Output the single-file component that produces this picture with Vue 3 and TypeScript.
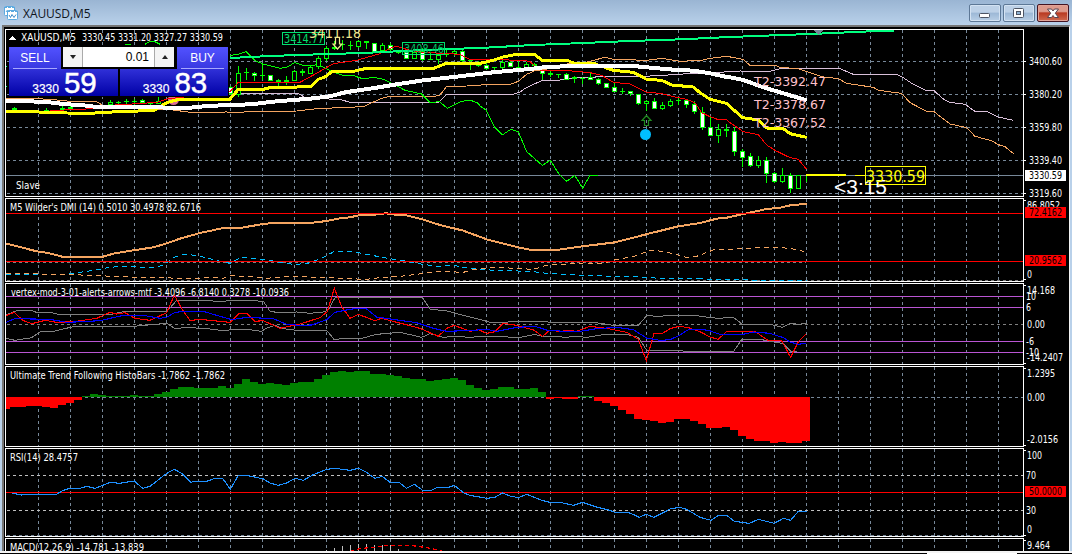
<script setup lang="ts">
type Run = [number, number, string]
interface Trace { color: string; width: number; dash?: string; runs: Run[] }
interface Label { t: string; x: number; y: number; w: number; c?: string; s?: number; f?: string }

// Each run holds an origin followed by x,y pairs in thirds of a pixel.
const points = (runs: Run[]): string =>
  runs.map(([ox, oy, list]) =>
    list.trim().split(/\s+/).map((p) => {
      const [x, y] = p.split(',').map(Number)
      return (ox + x / 3).toFixed(2) + ',' + (oy + y / 3).toFixed(2)
    }).join(' ')
  ).join(' ')

const SANDY = '#f4a460'
const GREY = '#808080'
const GRID = '#778899'
const LIME = '#00ff00'

const gridX = Array.from({ length: 31 }, (_, i) => 38 + i * 32)
const panels = [
  { top: 29, bottom: 196 }, { top: 198, bottom: 281 }, { top: 283, bottom: 364 },
  { top: 366, bottom: 446 }, { top: 448, bottom: 536 }, { top: 538, bottom: 560 },
]
const gridY = [61, 94, 127, 160, 193]

const underTraces: Trace[] = [
  { color: '#d8bfd8', width: 1, runs: [
    [0, 0, '690,281'],
    [230, 20, '0,221 205,221 230,235 330,238 360,247 625,247 650,223 780,223'],
    [480, 20, '100,223 120,216 135,205 187,181 235,181 265,175 340,172 360,169 500,169 530,166 600,164 620,160 700,158 780,153'],
    [730, 20, '120,154 150,146 330,146 370,163 500,163 520,173 545,190 590,212 612,212 640,237 660,247 705,253 735,274 770,274 805,291 850,301'],
  ] },
  { color: SANDY, width: 1, runs: [
    [0, 0, '18,296 60,294 150,298 200,303 290,305 310,317 400,322 520,330 570,337 680,336 700,337'],
    [230, 20, '25,278 50,275 200,273 260,266 400,260 455,235 480,229 610,230 630,225 650,199 710,198 780,193'],
    [480, 20, '90,193 115,184 140,163 165,152 200,147 270,130 320,126 340,121 375,112 400,118 500,121 545,115 600,124 665,121 690,115 740,109 780,116'],
    [730, 20, '40,119 60,136 135,136 150,142 205,146 275,170 325,176 350,190 430,202 445,211 515,220 540,248 590,274 612,275 660,312 710,323 735,349 785,362 805,374 825,380 852,402'],
  ] },
  { color: LIME, width: 1, runs: [
    [230, 20, '0,106 25,103 48,95 75,122 100,132 150,145 175,140 194,127 220,137 245,138 262,133 300,152 335,165 365,165 400,177 430,172 460,178 500,197 525,211 575,222 600,248 628,245 652,265 695,244 720,240 745,250'],
    [480, 20, '0,258 18,270 43,320 67,345 92,328 115,335 140,395 187,436 211,421 236,461 260,484 284,466 308,504 330,466 353,466'],
  ] },
  { color: LIME, width: 1, runs: [[0, 0, '375,133 393,133']] },
  { color: LIME, width: 1, runs: [[0, 0, '435,133 450,124 463,124 480,133']] },
]

const overTraces: Trace[] = [
  { color: '#ff0000', width: 1, runs: [
    [0, 0, '150,332 280,326 330,316 380,313 470,307 500,297 690,275 715,247'],
    [230, 20, '25,187 210,187 245,168 310,131 380,121 450,101 480,85 500,79 540,91 580,97 690,103 720,118'],
    [480, 20, '0,118 130,121 150,125 180,150 265,152 330,158 365,166 400,187 450,192 500,217 540,220 580,230 620,238 645,248 665,278 690,290 715,299 740,300'],
    [730, 20, '0,308 40,335 85,344 110,375 135,391 180,413 205,418 230,448'],
  ] },
  { color: '#00ff7f', width: 2, runs: [
    [0, 0, '690,174'],
    [230, 20, '60,111 120,108 265,103 400,99 560,91 740,84'],
    [480, 20, '0,84 160,75 310,69 450,63 600,58 750,51'],
    [730, 20, '0,51 130,46 265,41 420,34 492,32'],
  ] },
  { color: '#ffff00', width: 3, runs: [
    [0, 0, '18,334 90,335 200,339 270,340 370,334 460,332 500,308 540,297 690,297 715,268 790,268'],
    [230, 20, '100,208 120,203 243,200 265,178 285,171 305,155 370,154 405,146 612,145 648,130 750,130'],
    [480, 20, '0,130 40,121 65,112 110,103 163,103 187,121 262,121 280,129 340,130 400,151 460,157 500,178 545,181 575,195 640,201 660,218 690,238 740,250'],
    [730, 20, '0,260 38,293 85,300 110,324 160,326 180,341 230,352'],
  ] },
  { color: '#ffffff', width: 4, runs: [
    [0, 0, '18,303 75,303 160,308 190,312 250,316 290,321 400,322 570,323 620,318 690,315'],
    [230, 20, '20,255 70,252 140,244 240,236 300,229 345,217 440,203 500,193 580,181 680,170 780,158'],
    [480, 20, '60,155 150,147 190,142 270,138 450,137 500,142 580,149 640,152 690,160 740,171'],
    [730, 20, '0,172 40,180 100,202 180,226 230,241'],
  ] },
]

// x, high, low, body top, body bottom, kind (1 filled, 0 hollow), in thirds of a pixel from the origin
type Candle = [number, number, number, number, number, number]
const candleSets: { ox: number; oy: number; list: Candle[] }[] = [
  { ox: 0, oy: 0, list: [
    [43, 321, 333, 324, 330, 1], [139, 323, 333, 329, 332, 1], [187, 319, 332, 324, 330, 0], [211, 319, 330, 321, 327, 0],
    [331, 300, 315, 306, 315, 0], [355, 302, 315, 306, 309, 1], [379, 297, 315, 303, 306, 1], [403, 297, 320, 303, 306, 1],
    [427, 298, 312, 300, 309, 1], [451, 305, 320, 309, 312, 1], [475, 292, 312, 303, 312, 0], [691, 258, 284, 261, 282, 1],
  ] },
  { ox: 230, oy: 20, list: [
    [25, 139, 231, 159, 225, 0], [49, 145, 181, 156, 160, 1], [73, 156, 183, 159, 168, 1], [97, 131, 180, 165, 168, 1],
    [121, 165, 183, 165, 183, 1], [145, 177, 199, 180, 186, 1], [169, 168, 196, 181, 185, 1], [193, 150, 184, 153, 183, 0],
    [217, 147, 168, 153, 159, 1], [241, 135, 162, 141, 162, 0], [265, 107, 147, 114, 141, 0], [289, 79, 123, 84, 117, 0],
    [313, 63, 90, 81, 87, 1], [337, 60, 90, 73, 76, 1], [361, 63, 90, 75, 79, 1], [385, 60, 84, 63, 81, 0],
    [409, 63, 88, 63, 70, 1], [433, 69, 96, 69, 96, 1], [457, 69, 94, 75, 93, 0], [481, 69, 99, 75, 90, 1],
    [505, 92, 102, 96, 99, 1], [529, 91, 118, 91, 118, 1], [553, 90, 117, 96, 117, 0], [577, 84, 123, 93, 120, 1],
    [601, 96, 120, 117, 120, 1], [625, 102, 132, 105, 120, 0], [649, 87, 112, 102, 105, 1], [673, 84, 108, 94, 103, 0],
    [697, 90, 126, 93, 123, 1], [721, 118, 150, 120, 124, 1], [745, 124, 142, 133, 137, 1], [769, 129, 150, 135, 147, 1],
  ] },
  { ox: 480, oy: 20, list: [
    [19, 132, 150, 135, 147, 1], [43, 141, 151, 141, 145, 1], [67, 120, 147, 127, 143, 0], [91, 124, 142, 126, 141, 1],
    [115, 122, 146, 140, 144, 1], [139, 127, 146, 132, 143, 0], [163, 130, 142, 132, 137, 1], [187, 150, 181, 151, 162, 1],
    [211, 154, 172, 159, 166, 1], [235, 162, 174, 162, 166, 1], [259, 159, 181, 162, 180, 1], [283, 168, 189, 172, 176, 1],
    [307, 171, 192, 174, 178, 1], [331, 160, 181, 171, 180, 1], [355, 175, 195, 177, 192, 1], [379, 189, 204, 189, 204, 1],
    [403, 189, 216, 201, 216, 1], [427, 204, 222, 213, 217, 1], [451, 212, 228, 214, 223, 1], [475, 222, 255, 222, 252, 1],
    [499, 240, 273, 243, 252, 0], [523, 234, 267, 243, 267, 1], [547, 246, 271, 255, 267, 0], [571, 237, 261, 243, 258, 0],
    [595, 234, 256, 240, 244, 1], [619, 237, 264, 240, 255, 1], [643, 243, 282, 252, 276, 1], [667, 261, 330, 276, 324, 1],
    [691, 290, 348, 321, 348, 1], [715, 312, 370, 327, 348, 0], [739, 312, 351, 327, 334, 1], [763, 321, 408, 333, 396, 1],
  ] },
  { ox: 730, oy: 20, list: [
    [37, 387, 441, 393, 414, 1], [61, 399, 441, 408, 438, 1], [85, 408, 444, 420, 438, 0], [109, 411, 489, 420, 462, 1],
    [133, 456, 489, 459, 486, 1], [157, 444, 489, 465, 486, 0], [181, 459, 519, 465, 507, 1], [205, 465, 507, 465, 507, 0],
  ] },
]
const candles = candleSets.flatMap((set) => set.list.map(([x, hi, lo, top, bottom, filled]) => {
  const y = Math.round(set.oy + top / 3)
  return {
    x: Math.floor(set.ox + x / 3),
    hi: Math.round(set.oy + hi / 3),
    lo: Math.round(set.oy + lo / 3),
    y,
    h: Math.max(1, Math.round(set.oy + bottom / 3) - y),
    fill: filled ? '#ffffff' : '#000000',
  }
}))

const indicatorTraces: Trace[] = [
  { color: '#00bfff', width: 1, dash: '5 4', runs: [
    [0, 195, '18,238 100,240 200,238 240,232 310,222 325,217 380,214 460,219 490,210 520,188 550,178 590,181 640,194 690,205 725,186 760,191 790,193 850,204 880,208 920,206 960,192 1000,171 1050,168'],
    [350, 195, '0,168 60,180 120,191 160,197 200,205 260,214 310,211 350,219 430,226 540,229 600,236 700,241 800,244 870,246 930,250 1060,250'],
    [700, 195, '0,250 20,253 140,254 150,257 320,257'],
  ] },
  { color: SANDY, width: 1, dash: '5 4', runs: [
    [0, 195, '18,235 110,236 130,238 230,238 250,241 350,244 400,247 500,247 520,250 600,250 620,247 670,250 690,241 760,246 800,250 850,245 900,244 950,248 1050,250'],
    [350, 195, '40,254 90,248 160,243 230,234 270,229 340,232 370,224 440,217 550,223 590,211 700,204 760,205 800,193 850,185 900,166 940,169 1010,187 1040,184'],
    [700, 195, '0,180 45,163 90,165 110,161 190,158 240,157 300,165 318,173'],
  ] },
  { color: SANDY, width: 2, runs: [
    [0, 195, '18,146 40,151 110,169 145,174 190,186 305,186 340,176 400,166 460,157 500,145 540,131 600,114 670,99 725,98 790,87 820,84 930,84 980,78 1020,70'],
    [350, 195, '0,67 30,60 95,58 105,54 125,58 170,61 220,74 270,90 340,107 410,133 500,156 545,165 620,165 690,155 795,142 900,115 985,94'],
    [700, 195, '0,84 50,71 80,68 130,57 200,42 240,38 275,30 320,27'],
  ] },
  { color: GREY, width: 1, runs: [
    [0, 195, '18,360 50,347 95,347 115,354 150,351 170,357 340,357 370,350 500,350 530,316 620,316 650,319 740,316 790,319 810,349 830,352 890,351 930,355 970,351 985,345 1005,308'],
    [350, 195, '0,307 217,307 240,342 290,348 430,384 490,380 545,380 580,379 600,382 730,382 790,391 865,391 890,362 930,364 960,361 1040,361'],
    [700, 195, '0,364 55,370 100,367 127,388 210,388 248,397 270,385 295,388 320,385'],
  ] },
  { color: GREY, width: 1, runs: [
    [0, 195, '18,430 45,436 95,428 120,411 165,408 215,396 300,394 400,394 500,385 525,401 560,397 630,402 660,406 740,403 785,409 800,399 825,391 850,401 890,406 980,406 1002,433'],
    [350, 195, '0,430 35,430 80,418 150,412 215,427 240,416 280,427 310,424 360,427 400,424 510,427 555,418 580,425 620,424 645,427 680,424 710,427 760,419 830,418 865,427 890,466 1050,469'],
    [700, 195, '100,470 125,434 185,434 250,446 275,471 290,470'],
  ] },
  { color: '#ff0000', width: 1.1, runs: [
    [0, 195, '18,362 43,352 68,376 95,386 135,376 170,382 220,380 290,370 330,352 350,357 375,353 405,370 450,376 500,353 523,300 545,340 570,377 600,373 690,382 715,357 740,355 765,379 790,377 840,400 900,387 960,368 982,350 1003,280 1025,335 1050,370'],
    [350, 195, '25,358 75,377 95,370 210,400 265,424 290,400 313,391 360,409 385,404 410,415 435,410 460,385 500,391 550,405 578,424 600,405 630,410 650,406 680,409 720,394 770,400 830,412 865,433 889,497 912,415 938,415 960,401 988,394 1015,398'],
    [700, 195, '0,410 30,426 55,433 80,409 165,409 205,437 245,437 272,487 295,440 318,417'],
  ] },
  { color: '#0000ff', width: 1.1, runs: [
    [0, 195, '18,382 45,371 150,373 200,382 250,380 300,377 370,361 430,361 480,370 500,367 525,352 560,349 610,349 650,361 695,374 740,367 820,371 860,388 900,391 935,390 980,374 1005,352'],
    [350, 195, '0,343 30,339 50,342 80,366 150,376 200,383 250,400 290,409 370,406 410,403 440,409 500,397 555,394 590,405 640,409 690,409 740,401 800,397 850,404 890,429 935,437 965,432 990,420 1015,404'],
    [700, 195, '0,403 25,406 60,418 130,418 160,411 210,415 250,428 270,441 295,448 318,444'],
  ] },
  { color: '#1e90ff', width: 1.1, runs: [
    [0, 365, '35,384 65,390 100,388 150,388 165,390 190,376 210,370 240,370 260,364 285,370 330,352 360,355 375,352 403,348 428,370 450,364 500,325 523,313 545,325 572,352 585,349 620,349 645,340 668,340 691,373 715,331 740,331 790,342 810,354 835,361 860,354 885,340 910,346 940,329 980,313 1005,310'],
    [350, 365, '0,316 25,310 45,319 75,340 97,334 120,352 147,352 170,370 193,358 218,376 245,376 262,367 295,367 313,361 340,383 360,391 410,400 435,397 457,384 480,393 505,398 530,388 575,406 600,412 630,412 670,421 697,412 740,426 780,436 795,442 840,444 868,457 888,448 912,457 940,443 960,432 988,427 1010,433'],
    [700, 365, '0,457 33,466 55,451 80,451 103,469 148,475 175,463 223,475 250,460 272,466 295,439 320,439'],
  ] },
  { color: '#ff0000', width: 1.2, dash: '4 3', runs: [
    [350, 365, '0,559 30,551 110,542 180,541 230,548 275,557'],
  ] },
]

const levels = [
  { y: 213, c: '#ff0000' }, { y: 261, c: '#ff0000' }, { y: 296, c: '#ba55d3' }, { y: 307, c: '#ba55d3' },
  { y: 341, c: '#ba55d3' }, { y: 352, c: '#ba55d3' }, { y: 492, c: '#ff0000' },
]
const dashedLevels = [
  { y: 262, c: GREY, to: 806 }, { y: 280, c: GREY, to: 1023 }, { y: 324, c: GREY, to: 1023 }, { y: 397, c: GRID, to: 1023 },
  { y: 475, c: '#c0c0c0', to: 1023 }, { y: 510, c: '#c0c0c0', to: 1023 }, { y: 535, c: GRID, to: 1023 },
]

// Signed bar heights, one per candle
const histo = [
  -12, -10, -10, -9, -9, -10, -11, -8, -6, -3, 1, 3, 2, 1, 1, 1, 2, 1, 1, 3, 5, 8, 10, 10, 9, 9, 9, 11, 9, 13, 18, 15, 13, 14, 13,
  12, 14, 15, 15, 18, 22, 25, 26, 25, 26, 26, 23, 23, 22, 21, 19, 18, 18, 16, 17, 18, 19, 17, 12, 9, 7, 8, 10, 10, 8, 8, 9, 5,
  -2, -1, -2, -2, 1, 1, -4, -6, -9, -13, -17, -22, -23, -24, -26, -25, -22, -22, -24, -27, -31, -31, -30, -33, -39, -42, -44, -44,
  -46, -45, -46, -46, -44,
].map((v, k) => ({
  x: Math.max(6, 2 + 8 * k),
  w: k === 0 ? 4 : 8,
  y: v > 0 ? 397 - v : 397,
  h: Math.abs(v),
  c: v > 0 ? '#008000' : '#ff0000',
}))

const macdBars = [
  [326, 550], [334, 548], [342, 546], [350, 545], [358, 544], [366, 544], [374, 545], [382, 545], [390, 545], [398, 549],
]

const ticks = [61, 94, 127, 160, 193, 200, 279, 285, 363, 368, 445, 450, 535, 540]

const labels: Label[] = [
  { t: 'XAUUSD,M5', x: 21, y: 41, w: 55 },
  { t: '3330.45 3331.20 3327.27 3330.59', x: 82, y: 41, w: 141 },
  { t: 'Slave', x: 16, y: 189, w: 24 },
  { t: "M5 Wilder's DMI (14) 0.5010 30.4978 82.6716", x: 10, y: 211, w: 191 },
  { t: 'vertex-mod-3-01-alerts-arrows-mtf -3.4096 -6.8140 0.3278 -10.0936', x: 11, y: 296, w: 278 },
  { t: 'Ultimate Trend Following HistoBars -1.7862 -1.7862', x: 10, y: 379, w: 215 },
  { t: 'RSI(14) 28.4757', x: 10, y: 461, w: 68 },
  { t: 'MACD(12,26,9) -14.781 -13.839', x: 10, y: 551, w: 134 },
  { t: '3400.60', x: 1029, y: 65, w: 33 },
  { t: '3380.20', x: 1029, y: 98, w: 33 },
  { t: '3359.80', x: 1029, y: 131, w: 33 },
  { t: '3339.40', x: 1029, y: 164, w: 33 },
  { t: '3319.60', x: 1029, y: 197, w: 33 },
  { t: '86.8052', x: 1027, y: 209, w: 33 },
  { t: '0', x: 1027, y: 278, w: 5 },
  { t: '14.168', x: 1027, y: 294, w: 28 },
  { t: '10', x: 1026, y: 300, w: 10 },
  { t: '6', x: 1026, y: 311, w: 5 },
  { t: '0.00', x: 1027, y: 328, w: 18 },
  { t: '-6', x: 1026, y: 345, w: 8 },
  { t: '-10', x: 1026, y: 356, w: 13 },
  { t: '-14.2407', x: 1027, y: 361, w: 36 },
  { t: '1.2395', x: 1027, y: 377, w: 28 },
  { t: '0.00', x: 1027, y: 401, w: 18 },
  { t: '-2.0156', x: 1027, y: 443, w: 31 },
  { t: '100', x: 1027, y: 459, w: 15 },
  { t: '70', x: 1026, y: 479, w: 10 },
  { t: '30', x: 1026, y: 514, w: 10 },
  { t: '0', x: 1027, y: 533, w: 5 },
  { t: '9.464', x: 1027, y: 549, w: 23 },
]
const tags = [
  { t: '3330.59', y: 170, bg: '#ffffff' },
  { t: '72.4162', y: 207, bg: '#ff0000' },
  { t: '20.9562', y: 255, bg: '#ff0000' },
  { t: '50.0000', y: 486, bg: '#ff0000' },
]
const marks: Label[] = [
  { t: '3414.77', x: 284, y: 43, w: 40, c: '#00e070', s: 12 },
  { t: '3408.46', x: 404, y: 53, w: 40, c: '#00c065', s: 12 },
  { t: '3411.18', x: 309, y: 38, w: 52, c: '#f0e68c', s: 14 },
  { t: 'T2-3392.47', x: 754, y: 86, w: 72, c: '#ffc0cb', s: 13 },
  { t: 'T2-3378.67', x: 754, y: 109, w: 72, c: '#ffc0cb', s: 13 },
  { t: 'T2-3367.52', x: 754, y: 127, w: 72, c: '#ffc0cb', s: 13 },
  { t: '<3:15', x: 834, y: 194, w: 53, c: '#ffffff', s: 20, f: 'Liberation Sans' },
  { t: '3330.59', x: 866, y: 182, w: 59, c: '#ffff00', s: 16 },
]
</script>

<template>
  <div class="window">
    <header class="titlebar">
      <svg class="app-icon" width="16" height="16" viewBox="0 0 16 16">
        <rect x="1.500" y="1.500" width="10" height="9" rx="1" fill="#fff" stroke="#5aa9e0" />
        <path d="M1 2.500h11" stroke="#5aa9e0" stroke-dasharray="3 1" />
        <path d="M3 7l1.500-2 2 2 2-2 1 1" fill="none" stroke="#5aa9e0" />
        <rect x="4.500" y="5.500" width="10" height="9" rx="1" fill="#fff" stroke="#5aa9e0" />
        <path d="M4 6.500h11" stroke="#5aa9e0" stroke-dasharray="3 1" />
        <path d="M6 10l1.500 2.500 1.500-3 2 3 2-3" fill="none" stroke="#3d8cc9" />
      </svg>
      <span class="caption">XAUUSD,M5</span>
      <div class="controls">
        <span class="control"><svg width="30" height="17"><rect x="9.500" y="8.500" width="10" height="4" rx="1" fill="#fff" stroke="#4d5564" /></svg></span>
        <span class="control"><svg width="30" height="17"><rect x="9.500" y="3.500" width="10" height="9" rx="1" fill="#fff" stroke="#4d5564" /><rect x="12.500" y="6.500" width="4" height="3" fill="#8fb2d3" stroke="#4d5564" /></svg></span>
        <span class="control close"><svg width="30" height="17"><path d="M9.500 4h4l1.500 2 1.500-2h4l-3.200 4.200 3.200 4.300h-4l-1.500-2-1.500 2h-4l3.200-4.300z" fill="#fff" stroke="#5a4550" /></svg></span>
      </div>
    </header>
    <main class="client">
      <svg class="chart" width="1065" height="524" viewBox="4 27 1065 524" shape-rendering="crispEdges">
        <rect x="4" y="27" width="1065" height="524" fill="#000" />
        <g :stroke="GRID" stroke-dasharray="3 3">
          <template v-for="p in panels" :key="p.top">
            <line v-for="x in gridX" :key="x" :x1="x + 0.5" :x2="x + 0.5" :y1="p.top + 1" :y2="p.bottom" />
          </template>
          <line v-for="y in gridY" :key="y" x1="7" x2="1023" :y1="y + 0.5" :y2="y + 0.5" />
        </g>
        <line x1="6" x2="1023" y1="175.500" y2="175.500" :stroke="GRID" />
        <path d="M6 66.500h1M6 86.500h1" stroke="#00ff7f" />

        <polyline v-for="(t, i) in underTraces" :key="'u' + i" :points="points(t.runs)" fill="none" :stroke="t.color" :stroke-width="t.width" />
        <g v-for="(c, i) in candles" :key="'c' + i">
          <rect :x="c.x" :y="c.hi" width="1" :height="c.lo - c.hi" fill="#00ff00" />
          <rect :x="c.x - 2" :y="c.y" width="5" :height="c.h" fill="#00ff00" />
          <rect v-if="c.h > 2" :x="c.x - 1" :y="c.y + 1" width="3" :height="c.h - 2" :fill="c.fill" />
        </g>
        <rect x="806" y="175" width="1" height="7" fill="#00ff00" />
        <circle cx="173.500" cy="99.500" r="5.500" fill="#db7093" shape-rendering="auto" />
        <polyline v-for="(t, i) in overTraces" :key="'o' + i" :points="points(t.runs)" fill="none" :stroke="t.color" :stroke-width="t.width" />

        <circle cx="645.500" cy="134.500" r="5.500" fill="#00bfff" shape-rendering="auto" />
        <path d="M646.500 115.500l4.500 5h-2.500v5h-4v-5h-2.500z" fill="none" stroke="#1f8a1f" stroke-width="1.200" shape-rendering="auto" />
        <path d="M335.500 37.500h4v6.500h2.500l-4.500 5-4.500-5h2.500z" fill="none" stroke="#f0e68c" stroke-width="1.200" shape-rendering="auto" />
        <rect x="806" y="174" width="40" height="2" fill="#ffff00" />
        <rect x="855" y="175" width="10" height="1" fill="#ffff00" />
        <path d="M814 30h9l-4.500 5z" fill="#778899" />
        <g fill="none">
          <rect x="282.500" y="32.500" width="42" height="12" stroke="#00e070" />
          <rect x="402.500" y="42.500" width="42" height="12" stroke="#00e070" />
          <rect x="865.500" y="166.500" width="60" height="18" stroke="#ffff00" />
        </g>

        <line v-for="l in dashedLevels" :key="'d' + l.y" x1="7" :x2="l.to" :y1="l.y + 0.5" :y2="l.y + 0.5" :stroke="l.c" stroke-dasharray="3 3" />
        <polyline v-for="(t, i) in indicatorTraces.slice(0, 3)" :key="'a' + i" :points="points(t.runs)" fill="none" :stroke="t.color" :stroke-width="t.width" :stroke-dasharray="t.dash" />
        <line v-for="l in levels" :key="'l' + l.y" x1="6" x2="1023" :y1="l.y + 0.5" :y2="l.y + 0.5" :stroke="l.c" />
        <rect v-for="b in histo" :key="'h' + b.x" :x="b.x" :y="b.y" :width="b.w" :height="b.h" :fill="b.c" />
        <rect v-for="b in macdBars" :key="'m' + b[0]" :x="b[0]" :y="b[1]" width="1" :height="551 - b[1]" fill="#c0c0c0" />
        <polyline v-for="(t, i) in indicatorTraces.slice(3)" :key="'i' + i" :points="points(t.runs)" fill="none" :stroke="t.color" :stroke-width="t.width" :stroke-dasharray="t.dash" />

        <g class="labels" fill="#fff">
          <text v-for="(l, i) in labels" :key="'t' + i" :x="l.x" :y="l.y" :textLength="l.w" lengthAdjust="spacingAndGlyphs">{{ l.t }}</text>
          <text v-for="(l, i) in marks" :key="'k' + i" :x="l.x" :y="l.y" :textLength="l.w" lengthAdjust="spacingAndGlyphs" :font-size="l.s" :font-family="l.f" :fill="l.c">{{ l.t }}</text>
        </g>
        <rect x="6" y="27" width="1016" height="2" fill="#000" />
        <g v-for="t in tags" :key="t.y" class="labels">
          <rect x="1025" :y="t.y" width="41" height="11" :fill="t.bg" />
          <text x="1029" :y="t.y + 9" textLength="33" lengthAdjust="spacingAndGlyphs" fill="#000">{{ t.t }}</text>
        </g>
        <path d="M9 40h7l-3.500-4z" fill="#fff" />
        <rect v-for="p in panels" :key="'f' + p.top" x="5.500" :y="p.top + 0.5" width="1018" :height="p.bottom - p.top" fill="none" stroke="#fff" />
        <path v-for="y in ticks" :key="'y' + y" :d="`M1024 ${y + 0.5}h2`" stroke="#fff" />
      </svg>

      <section class="trade">
        <div class="head sell">SELL</div>
        <div class="volume">
          <span class="step"><i class="down"></i></span>
          <span class="amount">0.01</span>
          <span class="step"><i class="up"></i></span>
        </div>
        <div class="head buy">BUY</div>
        <div class="price left"><small>3330</small><b>59</b></div>
        <div class="price right"><small>3330</small><b>83</b></div>
      </section>
    </main>
    <footer class="edge"><span class="gap"></span></footer>
  </div>
</template>

<style>
html, body { margin: 0; overflow: hidden; background: #b9d1ea; }
</style>

<style scoped>
.window { width: 1072px; height: 554px; display: flex; flex-direction: column; background: #b9d1ea; overflow: hidden; }
.titlebar { height: 25px; display: flex; align-items: flex-start; box-sizing: border-box; padding: 0 3px 0 3px; background: linear-gradient(#9ab5d3, #b9d1ea); }
.app-icon { margin-top: 5px; flex: none; }
.caption { margin: 5px 0 0 4px; font: 12px/17px "Open Sans", "Noto Sans", sans-serif; letter-spacing: -0.05px; color: #10151c; flex: 1; }
.controls { display: flex; gap: 2px; margin-top: 4px; }
.control { box-sizing: border-box; width: 32px; height: 18px; border: 1px solid #5d7896; border-radius: 2px; box-shadow: inset 0 0 0 1px #d3e2f2; background: linear-gradient(#bdd1e7 0 45%, #9cb8d6 50%, #b9cfe6); overflow: hidden; }
.control svg { display: block; }
.close { border-color: #431422; box-shadow: inset 0 0 0 1px #e2a397; background: linear-gradient(#dd9a8c 0 40%, #b93a22 50%, #cf6a50); }
.client { position: relative; box-sizing: border-box; height: 526px; margin-right: 2px; border-top: 2px solid #767676; border-left: 2px solid #767676; border-right: 1px solid #f4f4f4; margin-left: 2px; }
.chart { display: block; }
.labels { font-family: "DejaVu Sans Condensed", "DejaVu Sans", sans-serif; font-size: 10px; }
.trade { position: absolute; left: 5px; top: 19px; width: 220px; height: 51px; box-sizing: border-box; padding: 1px 1px 1px 0; background: #000; display: grid; grid-template-columns: 52px 2px 55px 2px 55px 2px 51px; grid-template-rows: 22px 27px; font-family: "Liberation Sans", Arial, sans-serif; color: #fff; }
.head { position: relative; font-size: 12px; line-height: 22px; text-align: center; background: linear-gradient(#5252ff, #3838e0); }
.head::after { content: ""; position: absolute; left: 4px; right: 4px; bottom: 0; height: 1px; background: #a8a8ff; }
.sell { grid-column: 1; }
.buy { grid-column: 7; }
.volume { grid-column: 3 / 6; height: 20px; display: flex; background: #fff; color: #000; margin-right: 1px; }
.step { width: 19px; display: flex; align-items: center; justify-content: center; background: #f4f4f4; }
.step:first-child { border-right: 1px solid #aaa; }
.step:last-child { border-left: 1px solid #aaa; }
.step i { width: 0; height: 0; border: 3px solid transparent; }
.down { border-top: 4px solid #222 !important; border-bottom: 0 !important; }
.up { border-bottom: 4px solid #222 !important; border-top: 0 !important; }
.amount { flex: 1; font-size: 12px; line-height: 20px; text-align: right; padding-right: 5px; }
.price { display: flex; align-items: baseline; justify-content: center; box-sizing: border-box; padding-left: 2px; line-height: 27px; background: linear-gradient(#3030d8, #0000a6); white-space: nowrap; }
.left { grid-column: 1 / 5; margin-right: 2px; }
.right { grid-column: 5 / 8; }
.price small { font-size: 12px; margin-right: 5px; -webkit-text-stroke: 0.2px #fff; }
.price b { font-size: 29.5px; font-weight: 400; -webkit-text-stroke: 0.5px #fff; }
.edge { height: 3px; box-sizing: border-box; border-top: 2px solid #f4f4f4; background: #000; }
.gap { display: block; width: 90px; height: 1px; margin-left: 927px; background: #fff; }
</style>
